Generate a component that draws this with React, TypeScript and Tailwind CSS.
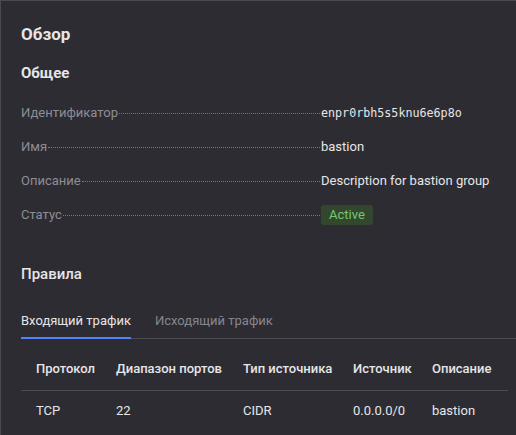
import React from "react";

const font = { fontFamily: "Roboto, 'Noto Sans', sans-serif" };

function Row({ label, children }: { label: string; children: React.ReactNode }) {
  return (
    <div className="flex items-baseline h-[34px]">
      <div className="flex items-baseline w-[300px] shrink-0">
        <span className="text-[#8e8d93] text-[13px] whitespace-nowrap">{label}</span>
        <span className="flex-1 border-b border-dotted border-[#77767c] mx-[1px] translate-y-[-3px]" />
      </div>
      <div className="text-[#e6e6e8] text-[13px]">{children}</div>
    </div>
  );
}

export default function App() {
  return (
    <div
      className="w-[516px] h-[435px] bg-[#2d2c33] border-l border-t border-[#4a4950] overflow-hidden pl-[20px] text-[#e6e6e8]"
      style={font}
    >
      <div className="pt-[22px] text-[17px] font-bold leading-[22px]">Обзор</div>
      <div className="pt-[18px] text-[15px] font-bold leading-[20px]">Общее</div>
      <div className="pt-[20px]">
        <Row label="Идентификатор">
          <span className="text-[11.7px] font-medium" style={{ fontFamily: "'DejaVu Sans Mono', monospace" }}>
            enpr0rbh5s5knu6e6p8o
          </span>
        </Row>
        <Row label="Имя">bastion</Row>
        <Row label="Описание">Description for bastion group</Row>
        <Row label="Статус">
          <span className="inline-block bg-[#33472f] text-[#73c76d] rounded-[3px] px-[8px] leading-[20px]">Active</span>
        </Row>
      </div>
      <div className="pt-[25px] text-[15px] font-medium leading-[20px]">Правила</div>
      <div className="mt-[28px] flex border-b border-[#4d4c53] text-[13px] leading-[18px]">
        <div className="border-b-2 border-[#5282ff] pb-[7px] mb-[-1px] text-[#e6e6e8]">Входящий трафик</div>
        <div className="ml-[24px] text-[#87868c] pb-[7px]">Исходящий трафик</div>
      </div>
      <div className="mr-[8px] mt-[18px] text-[13px]">
        <div className="flex h-[34px] items-center font-medium border-b border-[#4d4c53] text-[#e6e6e8] pb-[10px]">
          <div className="w-[95px] pl-[15px]">Протокол</div>
          <div className="w-[127px]">Диапазон портов</div>
          <div className="w-[110px]">Тип источника</div>
          <div className="w-[79px]">Источник</div>
          <div>Описание</div>
        </div>
        <div className="flex h-[40px] items-center text-[#e6e6e8]">
          <div className="w-[95px] pl-[15px]">TCP</div>
          <div className="w-[127px]">22</div>
          <div className="w-[110px]">CIDR</div>
          <div className="w-[79px]">0.0.0.0/0</div>
          <div>bastion</div>
        </div>
      </div>
    </div>
  );
}
